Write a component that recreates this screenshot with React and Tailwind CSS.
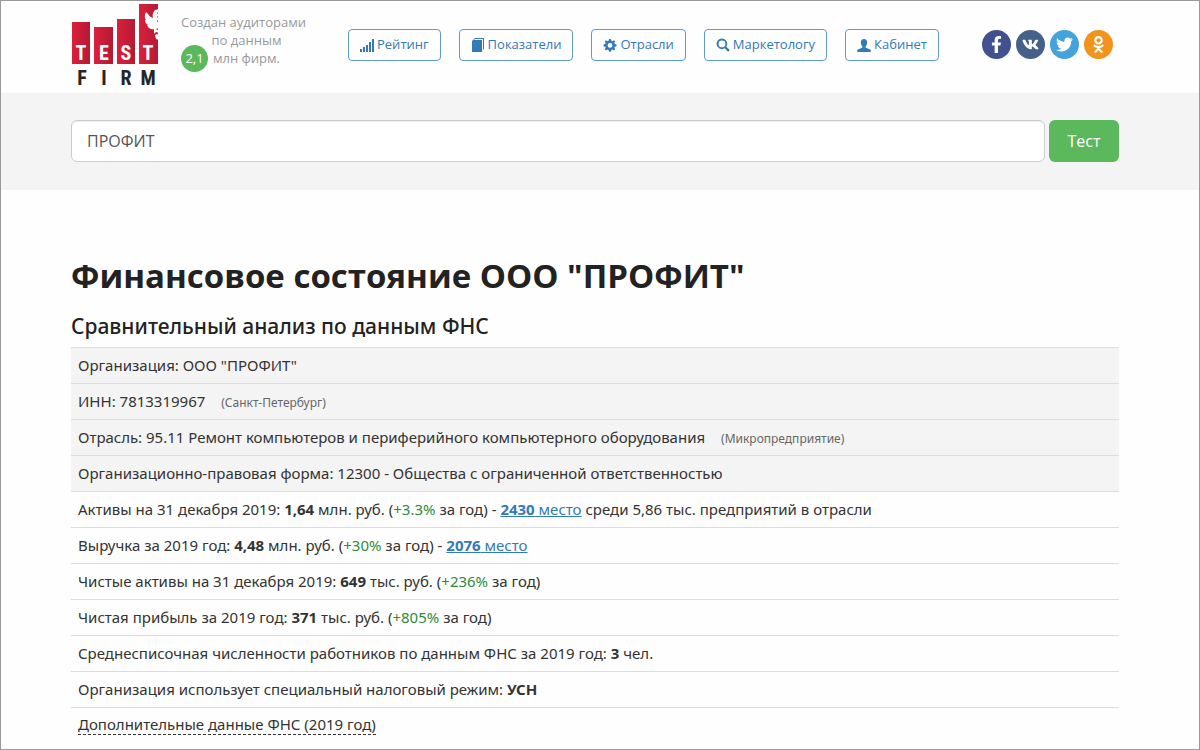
import React, { useState } from "react";
import { FaFacebookF, FaVk, FaTwitter, FaOdnoklassniki } from "react-icons/fa";

function Logo() {
  return (
    <svg width="90" height="90" viewBox="0 0 90 90" role="img" aria-label="TestFirm">
      <defs>
        <linearGradient id="bar" x1="0" y1="0" x2="1" y2="0">
          <stop offset="0" stopColor="#dc1f3c" />
          <stop offset="1" stopColor="#b31a35" />
        </linearGradient>
      </defs>
      <rect x="1" y="21" width="18" height="42" fill="url(#bar)" />
      <rect x="23" y="26" width="19" height="37" fill="url(#bar)" />
      <rect x="46" y="18" width="18" height="45" fill="url(#bar)" />
      <rect x="68" y="3" width="19" height="60" fill="url(#bar)" />
      {/* Bird */}
      <path
        d="M75 11 L77 13 C78 15 80 16 82 17 C81 14 82 11 84 9 L88 8 L88 10 L86 12 L88 14 L86 16 L88 18 L86 20 L88 23 L88 27 L85 28 L88 30 L88 32 L85 31 L83 33 L83 28 C80 29 77 27 76 24 L77 24 C75 23 74 21 74 19 L75 19 C73 16 74 13 75 11 Z M84 34 L86 33 L88 34 L88 39 L85 38 Z"
        fill="#fff"
      />
      <g
        fontFamily="'Roboto Condensed', Roboto, sans-serif"
        fontWeight="700"
        fontSize="20"
        textAnchor="middle"
      >
        <g fill="#fff">
          <text x="10" y="59">T</text>
          <text x="33" y="59">E</text>
          <text x="55" y="59">S</text>
          <text x="77" y="59">T</text>
        </g>
        <g fill="#252525">
          <text x="11" y="84">F</text>
          <text x="33" y="84">I</text>
          <text x="55" y="84">R</text>
          <text x="77" y="84">M</text>
        </g>
      </g>
    </svg>
  );
}

const icons = {
  signal: (
    <path d="M0 11h2v3H0z M3 9h2v5H3z M6 7h2v7H6z M9 4h2v10H9z M12 1h2v13h-2z" />
  ),
  book: (
    <path d="M4 0h9v11l-1 1V1H4L3 2h8v12H1V3z" />
  ),
  cog: (
    <path
      fillRule="evenodd"
      d="M6 1h2l.4 1.700 1.100.5L11 2.300 12.200 3.500l-.9 1.500.5 1.100L13.500 6.500v1.800l-1.700.4-.5 1.100.9 1.500L11 12.500l-1.500-.9-1.100.5L8 13.800H6l-.4-1.700-1.100-.5-1.500.9L1.800 11.300l.9-1.500-.5-1.100L.5 8.300V6.500l1.700-.4.500-1.100-.9-1.500L3 2.300l1.500.9 1.100-.5z M7 5a2.400 2.400 0 1 0 0 4.800 2.400 2.400 0 0 0 0-4.800z"
    />
  ),
  search: (
    <path
      fillRule="evenodd"
      d="M6 0.500a5.300 5.300 0 1 0 2.700 9.800l3.400 3.500 1.700-1.700-3.500-3.400A5.300 5.300 0 0 0 6 .5z M6 2.500a3.400 3.400 0 1 1 0 6.800 3.400 3.400 0 0 1 0-6.800z"
    />
  ),
  user: (
    <path d="M7 1c2 0 3.200 1.300 3.200 3.300 0 1.700-.6 3-1.500 3.900v1.500l4 1.600c.8.400 1.100.9 1.100 1.700v1H.2v-1c0-.8.3-1.300 1.100-1.700l4-1.600V8.200C4.400 7.300 3.800 6 3.800 4.300 3.800 2.300 5 1 7 1z" />
  ),
};

const menu = [
  { icon: "signal", label: "Рейтинг" },
  { icon: "book", label: "Показатели" },
  { icon: "cog", label: "Отрасли" },
  { icon: "search", label: "Маркетологу" },
  { icon: "user", label: "Кабинет" },
];

const socials = [
  { name: "Facebook", Icon: FaFacebookF, color: "bg-[#41508f]" },
  { name: "VK", Icon: FaVk, color: "bg-[#45618a]" },
  { name: "Twitter", Icon: FaTwitter, color: "bg-[#44a3da]" },
  { name: "Odnoklassniki", Icon: FaOdnoklassniki, color: "bg-[#f0941e]" },
];

function Header() {
  return (
    <header className="h-[92px] px-[70px] flex items-start">
      <a href="#">
        <Logo />
      </a>
      <div className="relative ml-5 mt-3 w-[123px] text-[13px] leading-[18px] text-center text-[#999] whitespace-nowrap">
        Создан аудиторами
        <br />
        <span className="pl-2">по данным</span>
        <br />
        <span className="pl-2">млн фирм.</span>
        <span className="absolute left-0 top-8 size-[27px] rounded-full bg-[#5cb85c] text-white leading-[27px]">
          2,1
        </span>
      </div>
      <nav className="ml-11 mt-7 flex gap-[18px]">
        {menu.map((item) => (
          <a
            key={item.label}
            href="#"
            className="h-8 px-[11px] flex items-center gap-[3px] whitespace-nowrap rounded border border-[#5f9bd0] text-[13px] text-[#337ab7]"
          >
            <svg width="14" height="14" viewBox="0 0 14 14" fill="currentColor">
              {icons[item.icon]}
            </svg>
            {item.label}
          </a>
        ))}
      </nav>
      <div className="ml-auto mr-4 mt-[29px] flex gap-[5px]">
        {socials.map(({ name, Icon, color }) => (
          <a
            key={name}
            href="#"
            aria-label={name}
            className={`size-[29px] rounded-full flex items-center justify-center text-white ${color}`}
          >
            <Icon size={17} />
          </a>
        ))}
      </div>
    </header>
  );
}

function SearchBar() {
  const [query, setQuery] = useState("ПРОФИТ");

  return (
    <form
      className="bg-[#f4f4f4] px-[70px] pt-[27px] pb-7 flex gap-1"
      onSubmit={(e) => e.preventDefault()}
    >
      <input
        type="text"
        aria-label="Организация"
        value={query}
        onChange={(e) => setQuery(e.target.value)}
        className="flex-1 min-w-0 h-[42px] px-[15px] rounded-md border border-[#ccc] bg-white text-base text-[#555] shadow-[inset_0_1px_1px_rgba(0,0,0,0.075)]"
      />
      <button
        type="submit"
        className="h-[42px] w-[70px] mr-2.5 rounded-md bg-[#5cb85c] text-base text-white"
      >
        Тест
      </button>
    </form>
  );
}

function Row({ shaded, children }) {
  return (
    <tr className={shaded ? "bg-[#f4f4f4]" : ""}>
      <td className="h-9 px-[7px] pb-0.5 border-t border-[#ddd]">{children}</td>
    </tr>
  );
}

function Note({ children }) {
  return <span className="ml-3 text-xs text-[#666]">{children}</span>;
}

function Growth({ children }) {
  return <span className="text-[#2e8b3c]">{children}</span>;
}

function Place({ n }) {
  return (
    <a href="#" className="text-[#337ab7] underline">
      <b>{n}</b> место
    </a>
  );
}

export default function App() {
  return (
    <div className="min-h-screen border border-[#999] bg-[#fefefe] font-['Open_Sans',sans-serif] text-[#333]">
      <Header />
      <SearchBar />
      <main className="pl-[70px] pr-20 pt-[62px]">
        <h1 className="text-[33px] leading-[48px] font-bold text-[#222]">
          Финансовое состояние ООО "ПРОФИТ"
        </h1>
        <h2 className="mt-3 mb-[7px] text-[21px] leading-7 font-medium text-[#222] font-['Noto_Sans','Open_Sans',sans-serif]">
          Сравнительный анализ по данным ФНС
        </h2>
        <table className="w-full text-[15px] leading-5 font-['Noto_Sans','Open_Sans',sans-serif]">
          <tbody>
            <Row shaded>Организация: ООО "ПРОФИТ"</Row>
            <Row shaded>
              ИНН: 7813319967 <Note>(Санкт-Петербург)</Note>
            </Row>
            <Row shaded>
              Отрасль: 95.11 Ремонт компьютеров и периферийного компьютерного
              оборудования <Note>(Микропредприятие)</Note>
            </Row>
            <Row shaded>
              Организационно-правовая форма: 12300 - Общества с ограниченной
              ответственностью
            </Row>
            <Row>
              Активы на 31 декабря 2019: <b>1,64</b> млн. руб. (
              <Growth>+3.3%</Growth> за год) - <Place n="2430" /> среди 5,86
              тыс. предприятий в отрасли
            </Row>
            <Row>
              Выручка за 2019 год: <b>4,48</b> млн. руб. (
              <Growth>+30%</Growth> за год) - <Place n="2076" />
            </Row>
            <Row>
              Чистые активы на 31 декабря 2019: <b>649</b> тыс. руб. (
              <Growth>+236%</Growth> за год)
            </Row>
            <Row>
              Чистая прибыль за 2019 год: <b>371</b> тыс. руб. (
              <Growth>+805%</Growth> за год)
            </Row>
            <Row>
              Среднесписочная численности работников по данным ФНС за 2019
              год: <b>3</b> чел.
            </Row>
            <Row>
              Организация использует специальный налоговый режим: <b>УСН</b>
            </Row>
            <Row>
              <button className="border-b border-dashed border-[#333]">
                Дополнительные данные ФНС (2019 год)
              </button>
            </Row>
          </tbody>
        </table>
      </main>
    </div>
  );
}
